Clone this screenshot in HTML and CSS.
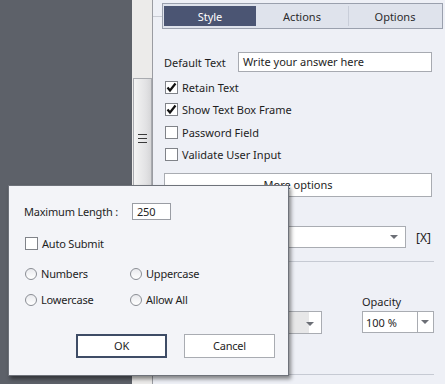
FILE: index.html
```html
<!DOCTYPE html>
<html>
<head>
    <title>Text Entry Box Properties</title>
    <link rel="stylesheet" href="styles.css">
</head>
<body>
    <div class="stage">
        <div class="canvas"></div>

        <div class="scroll-track">
            <div class="scroll-thumb">
                <span class="grip"></span>
            </div>
        </div>

        <div class="panel">
            <div class="tabbar">
                <div class="tab active">Style</div>
                <div class="tab">Actions</div>
                <div class="tab">Options</div>
            </div>

            <div class="field-row">
                <label class="field-label">Default Text</label>
                <div class="text-input">Write your answer here</div>
            </div>

            <div class="check-row"><span class="check checked"><svg viewBox="0 0 13 13"><path d="M2.5 6.5 L5 9.5 L10.5 2.5" /></svg></span>Retain Text</div>
            <div class="check-row"><span class="check checked"><svg viewBox="0 0 13 13"><path d="M2.5 6.5 L5 9.5 L10.5 2.5" /></svg></span>Show Text Box Frame</div>
            <div class="check-row"><span class="check"></span>Password Field</div>
            <div class="check-row"><span class="check"></span>Validate User Input</div>

            <div class="wide-btn">More options</div>

            <div class="select-row">
                <div class="select wide"><span class="arrow"></span></div>
                <span class="clear">[X]</span>
            </div>

            <div class="divider"></div>

            <div class="fill-row">
                <div class="group left">
                    <div class="group-label">&nbsp;</div>
                    <div class="select grey"><span class="arrow"></span></div>
                </div>
                <div class="group">
                    <div class="group-label">Opacity</div>
                    <div class="select split">
                        <span class="value">100 %</span>
                        <span class="split-btn"><span class="arrow"></span></span>
                    </div>
                </div>
            </div>

            <div class="divider low"></div>
        </div>

        <!-- more options dialog -->
        <div class="dialog">
            <div class="dlg-row">
                <span class="dlg-label">Maximum Length :</span>
                <div class="num-input">250</div>
            </div>
            <div class="dlg-check"><span class="check"></span>Auto Submit</div>
            <div class="radio-grid">
                <div class="radio-item"><span class="radio"></span>Numbers</div>
                <div class="radio-item"><span class="radio"></span>Uppercase</div>
                <div class="radio-item"><span class="radio"></span>Lowercase</div>
                <div class="radio-item"><span class="radio"></span>Allow All</div>
            </div>
            <div class="dlg-buttons">
                <div class="btn default">OK</div>
                <div class="btn">Cancel</div>
            </div>
        </div>
    </div>
</body>
</html>
```

FILE: styles.css
```css
body {
    margin: 0;
    padding: 0;
    font-family: "Noto Sans", "Open Sans", sans-serif;
    font-size: 11px;
    color: #1e1e1e;
}
.stage {
    position: relative;
    display: flex;
    width: 445px;
    height: 384px;
    overflow: hidden;
}
.canvas {
    width: 132px;
    background-color: #5d6169;
}
.scroll-track {
    width: 21px;
    background-color: #ecebea;
    border-right: 1px solid #9a9ca2;
    padding-top: 78px;
    box-sizing: border-box;
}
.scroll-thumb {
    margin-left: 1px;
    width: 19px;
    height: 260px;
    border: 1px solid #a9abb0;
    box-sizing: border-box;
    background: linear-gradient(to right, #f4f4f4, #e2e2e4 70%, #d6d6d8);
    padding-top: 55px;
}
.grip {
    display: block;
    margin-left: 4px;
    width: 9px;
    height: 9px;
    background: linear-gradient(#3a3a3a 0 1px, transparent 1px 4px, #3a3a3a 4px 5px, transparent 5px 8px, #3a3a3a 8px 9px);
}
.panel {
    flex: 1;
    background: linear-gradient(#c9ccd4, #c9ccd4) 0 16px / 10px 1px no-repeat, #eef0f6;
    padding: 3px 2px 0 11px;
    display: flex;
    flex-direction: column;
}

/* tabs */
.tabbar {
    display: flex;
    height: 26px;
    box-sizing: border-box;
    border: 1px solid #9aa0ad;
    padding: 2px 1px;
    background-color: #dfe3ec;
    margin-left: -2px;
}
.tab {
    flex: 1;
    display: flex;
    align-items: center;
    justify-content: center;
    color: #2c2c2c;
    border-left: 1px solid #c9ced9;
}
.tab:nth-child(2) {
    border-left: none;
}
.tab.active {
    background-color: #4b5573;
    color: #fff;
    border-left: none;
}

/* default text */
.field-row {
    display: flex;
    align-items: center;
    margin-top: 23px;
    height: 20px;
}
.field-label {
    width: 74px;
}
.text-input {
    width: 194px;
    height: 20px;
    box-sizing: border-box;
    border: 1px solid #a7aab1;
    background-color: #fff;
    padding-left: 4px;
    line-height: 18px;
}

/* checkboxes */
.check-row {
    display: flex;
    align-items: center;
    height: 22.5px;
}
.field-row + .check-row {
    margin-top: 4px;
}
.check {
    display: inline-block;
    width: 13px;
    height: 13px;
    box-sizing: border-box;
    border: 1px solid #808389;
    background-color: #fff;
    margin: 0 4px 0 1px;
    position: relative;
}
.check svg {
    position: absolute;
    left: -1px;
    top: -1px;
    width: 13px;
    height: 13px;
}
.check svg path {
    fill: none;
    stroke: #111;
    stroke-width: 2.2;
}
.wide-btn {
    margin-top: 7px;
    height: 24px;
    width: 268px;
    box-sizing: border-box;
    border: 1px solid #a9acb2;
    background-color: #fff;
    text-align: center;
    line-height: 22px;
}

/* selects */
.select-row {
    display: flex;
    align-items: center;
    margin-top: 29px;
}
.select {
    position: relative;
    height: 22px;
    box-sizing: border-box;
    border: 1px solid #a9acb2;
    background-color: #fff;
}
.select.wide {
    width: 242px;
}
.arrow {
    position: absolute;
    right: 7px;
    top: 8px;
    width: 0;
    height: 0;
    border-left: 4px solid transparent;
    border-right: 4px solid transparent;
    border-top: 4px solid #6c6f76;
}
.clear {
    margin-left: 10px;
    font-size: 12px;
    color: #222;
}
.divider {
    margin-top: 13px;
    width: 270px;
    height: 1px;
    background-color: #c6cad3;
}
.divider.low {
    margin-top: 40px;
}
.fill-row {
    display: flex;
    margin-top: 32px;
}
.group-label {
    height: 17px;
    line-height: 15px;
}
.group.left {
    width: 158px;
    margin-right: 40px;
}
.select.grey {
    height: 23px;
    background: linear-gradient(to right, #fff 0 2px, #e7e7e8 2px 144px, #fff 144px);
}
.select.grey .arrow {
    top: 10px;
}
.select.split {
    width: 72px;
    display: flex;
    align-items: center;
}
.value {
    flex: 1;
    padding-left: 3px;
}
.split-btn {
    position: relative;
    width: 15px;
    height: 20px;
    border-left: 1px solid #a9acb2;
}
.split-btn .arrow {
    right: 4px;
}

/* dialog */
.dialog {
    position: absolute;
    left: 8px;
    top: 185px;
    width: 281px;
    height: 191px;
    box-sizing: border-box;
    background-color: #f3f4f8;
    border: 1px solid #6e727a;
    box-shadow: 2px 3px 4px rgba(0, 0, 0, 0.45);
    padding: 17px 13px 0 15px;
    letter-spacing: -0.2px;
}
.dlg-row {
    display: flex;
    align-items: center;
    height: 17px;
}
.dlg-label {
    width: 108px;
}
.num-input {
    width: 39px;
    height: 17px;
    box-sizing: border-box;
    border: 1px solid #9a9da4;
    background-color: #fff;
    padding-left: 4px;
    line-height: 15px;
}
.dlg-check {
    display: flex;
    align-items: center;
    margin-top: 17px;
    height: 13px;
}
.radio-grid {
    display: grid;
    grid-template-columns: 105px 100px;
    row-gap: 13px;
    margin-top: 17px;
}
.radio-item {
    display: flex;
    align-items: center;
    height: 13px;
}
.radio {
    display: inline-block;
    width: 12px;
    height: 12px;
    box-sizing: border-box;
    border: 1px solid #8a8d94;
    border-radius: 50%;
    background: linear-gradient(#e9eaee, #fff);
    margin: 0 4px 0 1px;
}
.dlg-buttons {
    display: flex;
    justify-content: flex-end;
    gap: 17px;
    margin-top: 28px;
}
.btn {
    width: 91px;
    height: 24px;
    box-sizing: border-box;
    border: 1px solid #a9acb2;
    background-color: #fff;
    text-align: center;
    line-height: 22px;
}
.btn.default {
    border: 2px solid #3e4c66;
    line-height: 20px;
}
```
